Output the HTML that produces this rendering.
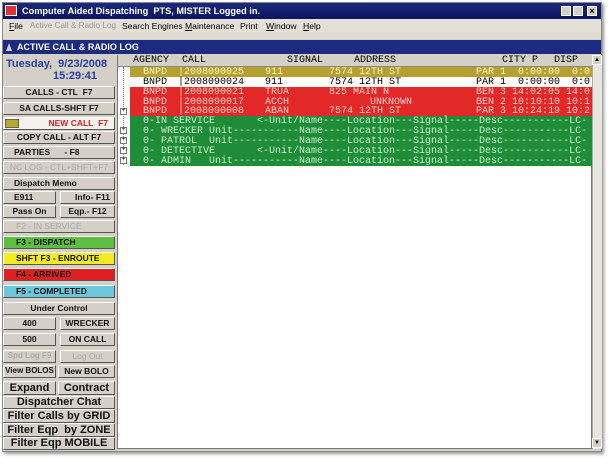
<!DOCTYPE html>
<html><head><meta charset="utf-8"><style>
*{margin:0;padding:0;box-sizing:border-box}
body{width:610px;height:458px;background:#fff;position:relative;overflow:hidden;font-family:"Liberation Sans",sans-serif}
.a{position:absolute}
.win{left:2px;top:2px;width:600px;height:450px;background:#d4d0c8;border:1px solid #888;box-shadow:2px 2px 3px #999}
.tb{left:3px;top:3px;width:598px;height:16px;background:linear-gradient(#1c2a7a,#0a1560);color:#fff;font-weight:bold;font-size:9.2px;line-height:16px;padding-left:19px}
.menu{left:3px;top:19px;width:598px;height:14px;font-size:8.6px;line-height:14px;color:#000;background:#e4e0d8}
.menu span{position:absolute;white-space:nowrap}
.tb2{left:3px;top:40px;width:598px;height:14px;background:#1c2a80;color:#fff;font-weight:bold;font-size:9px;line-height:14px;padding-left:14px}
.btn{position:absolute;background:#d4d0c8;border:1px solid;border-color:#fff #555 #555 #fff;font-weight:bold;font-size:8.5px;text-align:center;color:#111;line-height:10px;white-space:nowrap;overflow:hidden}
.grid{left:117px;top:55px;width:475px;height:394px;background:#fff;border:1px solid #777}
.hdr{left:118px;top:55px;width:474px;height:12px;background:#d4d0c8;border-bottom:1px solid #888;font-family:"Liberation Mono",monospace;font-size:10px;line-height:12px}
.rows{left:130px;top:67px;width:462px;height:99px;overflow:hidden}
.bg{position:absolute;left:0;width:462px;height:10px}
.row{position:absolute;left:0;width:462px;height:10px;font-family:"Liberation Mono",monospace;font-size:10px;line-height:11px;white-space:pre;z-index:2}
.row span{position:absolute;top:0}
.sb{left:592px;top:55px;width:10px;height:394px;background:#e8e6e0;border-left:1px solid #aaa}
.pl{position:absolute;left:120px;width:7px;height:7px;border:1px solid #777;background:#fff;font-size:6px;line-height:5px;text-align:center}
.y{color:#fff6c0}.k{color:#000}.r{color:#ffd0c8}.g{color:#c8f0c8}
</style></head><body>
<div class="a win"></div>
<div class="a tb">Computer Aided Dispatching&nbsp; PTS, MISTER Logged in.</div>
<div class="a" style="left:5px;top:5px;width:12px;height:11px;background:#d33;border:1px solid #fff"></div>
<div class="a" style="left:561px;top:6px;width:10px;height:10px;background:#d4d0c8;border:1px solid #fff"></div>
<div class="a" style="left:573px;top:6px;width:10px;height:10px;background:#d4d0c8;border:1px solid #fff"></div>
<div class="a" style="left:587px;top:6px;width:10px;height:10px;background:#d4d0c8;border:1px solid #fff;font-size:9px;line-height:8px;text-align:center;font-weight:bold">×</div>
<div class="a menu"><span style="left:6px"><u>F</u>ile</span><span style="left:27px;color:#999;font-size:8.2px">Active Call &amp; Radio Log</span><span style="left:119px">Search Engines</span><span style="left:182px"><u>M</u>aintenance</span><span style="left:237px">Print</span><span style="left:263px"><u>W</u>indow</span><span style="left:300px"><u>H</u>elp</span></div>
<div class="a" style="left:3px;top:33px;width:598px;height:6px;background:#e0dcd2"></div>
<div class="a tb2">ACTIVE CALL &amp; RADIO LOG</div>
<div class="a" style="left:6px;top:43px;width:0;height:0;border-left:3px solid transparent;border-right:3px solid transparent;border-bottom:8px solid #ccc"></div>
<div class="a" style="left:6px;top:58px;color:#2a3ea8;font-weight:bold;font-size:11px;line-height:13px">Tuesday,&nbsp; 9/23/2008</div>
<div class="a" style="left:53px;top:70px;color:#2a3ea8;font-weight:bold;font-size:11px;line-height:13px">15:29:41</div>

<div class="btn" style="left:3px;top:86px;width:112px;height:13px">CALLS - CTL&nbsp; F7</div>
<div class="btn" style="left:3px;top:102px;width:112px;height:13px">SA CALLS-SHFT F7</div>
<div class="btn" style="left:3px;top:117px;width:112px;height:13px;background:#f4f2ee;color:#e02020;text-align:right;padding-right:6px">NEW CALL&nbsp; F7</div>
<div class="a" style="left:5px;top:119px;width:14px;height:9px;background:#b8a830;border:1px solid #665"></div>
<div class="btn" style="left:3px;top:131px;width:112px;height:13px">COPY CALL - ALT F7</div>
<div class="btn" style="left:3px;top:146px;width:112px;height:13px;text-align:left;padding-left:10px">PARTIES&nbsp;&nbsp;&nbsp;&nbsp;&nbsp; - F8</div>
<div class="btn" style="left:3px;top:161px;width:112px;height:13px;color:#aaa;font-weight:normal">NC LOG - CTL+SHFT+F7</div>
<div class="btn" style="left:3px;top:177px;width:112px;height:13px;text-align:left;padding-left:10px">Dispatch Memo</div>
<div class="btn" style="left:3px;top:191px;width:53px;height:13px;text-align:left;padding-left:10px">E911</div>
<div class="btn" style="left:60px;top:191px;width:55px;height:13px;text-align:right;padding-right:4px">Info- F11</div>
<div class="btn" style="left:3px;top:205px;width:53px;height:13px">Pass On</div>
<div class="btn" style="left:60px;top:205px;width:55px;height:13px">Eqp.- F12</div>
<div class="btn" style="left:3px;top:220px;width:112px;height:13px;color:#aaa;font-weight:normal;text-align:left;padding-left:12px">F2 - IN SERVICE</div>
<div class="btn" style="left:3px;top:236px;width:112px;height:13px;background:#5cbf40;text-align:left;padding-left:12px">F3 - DISPATCH</div>
<div class="btn" style="left:3px;top:252px;width:112px;height:13px;background:#f2ec20;text-align:left;padding-left:12px">SHFT F3 - ENROUTE</div>
<div class="btn" style="left:3px;top:268px;width:112px;height:13px;background:#e02020;text-align:left;padding-left:12px">F4 - ARRIVED</div>
<div class="btn" style="left:3px;top:285px;width:112px;height:13px;background:#6cc8d8;text-align:left;padding-left:12px">F5 - COMPLETED</div>
<div class="btn" style="left:3px;top:302px;width:112px;height:13px">Under Control</div>
<div class="btn" style="left:3px;top:317px;width:53px;height:13px">400</div>
<div class="btn" style="left:60px;top:317px;width:55px;height:13px">WRECKER</div>
<div class="btn" style="left:3px;top:333px;width:53px;height:13px">500</div>
<div class="btn" style="left:60px;top:333px;width:55px;height:13px">ON CALL</div>
<div class="btn" style="left:3px;top:350px;width:53px;height:13px;color:#aaa;font-size:8px">Spd Log F9</div>
<div class="btn" style="left:60px;top:350px;width:55px;height:13px;color:#aaa;font-weight:normal">Log Out</div>
<div class="btn" style="left:3px;top:365px;width:53px;height:13px;font-size:8px">View BOLOS</div>
<div class="btn" style="left:58px;top:365px;width:57px;height:13px">New BOLO</div>
<div class="btn" style="left:3px;top:381px;width:53px;height:14px;font-size:11px;line-height:12px">Expand</div>
<div class="btn" style="left:58px;top:381px;width:57px;height:14px;font-size:11px;line-height:12px">Contract</div>
<div class="btn" style="left:3px;top:396px;width:112px;height:13px;font-size:11px;line-height:11px">Dispatcher Chat</div>
<div class="btn" style="left:3px;top:409px;width:112px;height:14px;font-size:11px;line-height:12px">Filter Calls by GRID</div>
<div class="btn" style="left:3px;top:423px;width:112px;height:14px;font-size:11px;line-height:12px">Filter Eqp&nbsp; by ZONE</div>
<div class="btn" style="left:3px;top:437px;width:112px;height:13px;font-size:11px;line-height:11px">Filter Eqp MOBILE</div>

<div class="a grid"></div>
<div class="a hdr"><span class="a" style="left:15px">AGENCY</span><span class="a" style="left:64px">CALL</span><span class="a" style="left:169px">SIGNAL</span><span class="a" style="left:236px">ADDRESS</span><span class="a" style="left:384px">CITY P</span><span class="a" style="left:436px">DISP</span></div>
<div class="a sb"></div>
<div class="a" style="left:592px;top:55px;width:10px;height:10px;background:#d4d0c8;border:1px solid #fff;font-size:6px;text-align:center;line-height:8px">▲</div>
<div class="a" style="left:592px;top:438px;width:10px;height:10px;background:#d4d0c8;border:1px solid #fff;font-size:6px;text-align:center;line-height:8px">▼</div>
<div class="a" style="left:123px;top:67px;width:1px;height:98px;border-left:1px dotted #888"></div>

<div class="a rows">
<div class="bg" style="top:0;background:#b8a030"></div>
<div class="bg" style="top:10px;background:#fff"></div>
<div class="bg" style="top:20px;height:29px;background:#e22828"></div>
<div class="bg" style="top:49px;height:50px;background:#1f8c3a"></div>
<div class="row y" style="top:0"><span style="left:13px">BNPD</span><span style="left:48px">|2008090025</span><span style="left:135px">911</span><span style="left:199px">7574 12TH ST</span><span style="left:346px">PAR 1  0:00:00  0:0</span></div>
<div class="row k" style="top:10px"><span style="left:13px">BNPD</span><span style="left:48px">|2008090024</span><span style="left:135px">911</span><span style="left:199px">7574 12TH ST</span><span style="left:346px">PAR 1  0:00:00  0:0</span></div>
<div class="row r" style="top:20px"><span style="left:13px">BNPD</span><span style="left:48px">|2008090021</span><span style="left:135px">TRUA</span><span style="left:199px">825 MAIN N</span><span style="left:346px">BEN 3 14:02:05 14:0</span></div>
<div class="row r" style="top:29.5px"><span style="left:13px">BNPD</span><span style="left:48px">|2008090017</span><span style="left:135px">ACCH</span><span style="left:240px">UNKNOWN</span><span style="left:346px">BEN 2 10:10:10 10:1</span></div>
<div class="row r" style="top:39px"><span style="left:13px">BNPD</span><span style="left:48px">|2008090008</span><span style="left:135px">ABAN</span><span style="left:199px">7574 12TH ST</span><span style="left:346px">PAR 3 10:24:19 10:2</span></div>
<div class="row g" style="top:49px"><span style="left:13px">0-IN SERVICE       &lt;-Unit/Name----Location---Signal-----Desc-----------LC-</span></div>
<div class="row g" style="top:59px"><span style="left:13px">0- WRECKER Unit-----------Name----Location---Signal-----Desc-----------LC-</span></div>
<div class="row g" style="top:69px"><span style="left:13px">0- PATROL  Unit-----------Name----Location---Signal-----Desc-----------LC-</span></div>
<div class="row g" style="top:79px"><span style="left:13px">0- DETECTIVE       &lt;-Unit/Name----Location---Signal-----Desc-----------LC-</span></div>
<div class="row g" style="top:89px"><span style="left:13px">0- ADMIN   Unit-----------Name----Location---Signal-----Desc-----------LC-</span></div>
</div>
<div class="pl" style="top:108px">+</div>
<div class="pl" style="top:127px">+</div>
<div class="pl" style="top:137px">+</div>
<div class="pl" style="top:147px">+</div>
<div class="pl" style="top:157px">+</div>
</body></html>
